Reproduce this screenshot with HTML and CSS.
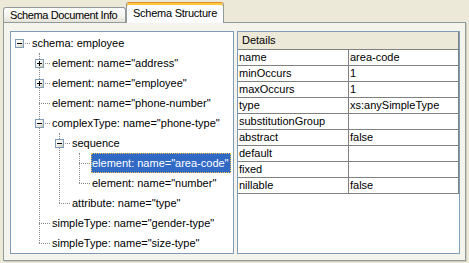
FILE: index.html
```html
<!DOCTYPE html>
<html>
<head>
<meta charset="utf-8">
<link rel="stylesheet" href="styles.css">
</head>
<body>
<div class="window">
  <div class="tabs">
    <div class="tab">Schema Document Info</div>
    <div class="tab active">Schema Structure</div>
  </div>
  <div class="panel">
    <div class="tree">
      <ul class="list">
        <li>
          <div class="row"><span class="tg minus"></span><span class="label">schema: employee</span></div>
          <ul class="list children">
            <li><div class="row"><span class="tg plus"></span><span class="label">element: name="address"</span></div></li>
            <li><div class="row"><span class="tg plus"></span><span class="label">element: name="employee"</span></div></li>
            <li><div class="row"><span class="tg none"></span><span class="label">element: name="phone-number"</span></div></li>
            <li>
              <div class="row"><span class="tg minus"></span><span class="label">complexType: name="phone-type"</span></div>
              <ul class="list children">
                <li>
                  <div class="row"><span class="tg minus"></span><span class="label">sequence</span></div>
                  <ul class="list children">
                    <li><div class="row"><span class="tg none"></span><span class="label selected">element: name="area-code"</span></div></li>
                    <li><div class="row"><span class="tg none"></span><span class="label">element: name="number"</span></div></li>
                  </ul>
                </li>
                <li><div class="row"><span class="tg none"></span><span class="label">attribute: name="type"</span></div></li>
              </ul>
            </li>
            <li><div class="row"><span class="tg none"></span><span class="label">simpleType: name="gender-type"</span></div></li>
            <li><div class="row"><span class="tg none"></span><span class="label">simpleType: name="size-type"</span></div></li>
          </ul>
        </li>
      </ul>
    </div>
    <div class="details">
      <div class="dhead">Details</div>
      <div class="drow"><span class="k">name</span><span class="v">area-code</span></div>
      <div class="drow"><span class="k">minOccurs</span><span class="v">1</span></div>
      <div class="drow"><span class="k">maxOccurs</span><span class="v">1</span></div>
      <div class="drow"><span class="k">type</span><span class="v">xs:anySimpleType</span></div>
      <div class="drow"><span class="k">substitutionGroup</span><span class="v"></span></div>
      <div class="drow"><span class="k">abstract</span><span class="v">false</span></div>
      <div class="drow"><span class="k">default</span><span class="v"></span></div>
      <div class="drow"><span class="k">fixed</span><span class="v"></span></div>
      <div class="drow"><span class="k">nillable</span><span class="v">false</span></div>
    </div>
  </div>
</div>
</body>
</html>
```
FILE: styles.css
```css
* { box-sizing: border-box; }
html, body { margin: 0; padding: 0; }
body {
  background: #ECE9D8;
  font-family: "Liberation Sans", Arial, sans-serif;
  font-size: 11px;
  color: #000;
  width: 469px;
  height: 263px;
  overflow: hidden;
}
.window { padding: 0; }

.tabs {
  display: flex;
  align-items: flex-end;
  height: 22px;
  padding-left: 3px;
}
.tab {
  position: relative;
  height: 15px;
  width: 123px;
  padding: 1px 0 0 6px;
  line-height: 13px;
  letter-spacing: -0.38px;
  white-space: nowrap;
  border: 1px solid #919B9C;
  border-bottom: none;
  border-radius: 3px 3px 0 0;
  background: linear-gradient(#FFFFFF, #F3F2EC 60%, #E4E2D8);
}
.tab.active {
  z-index: 2;
  width: 98px;
  height: 21px;
  margin-bottom: -1px;
  padding: 4px 0 3px 6px;
  letter-spacing: -0.25px;
  background: #FCFCFE;
  border-top: 1px solid #E68B2C;
  box-shadow: inset 0 2px 0 #FFC73C;
}

.panel {
  position: relative;
  margin-left: 3px;
  width: 463px;
  height: 239px;
  border: 1px solid #919B9C;
  background: #F4F3EC;
  padding: 8px 5px 6px 6px;
  display: grid;
  grid-template-columns: 224px 223px;
  column-gap: 3px;
  box-shadow: 1px 1px 0 #D0CDBE;
}

.tree {
  border: 1px solid #7F9DB9;
  background: #FFFFFF;
  padding: 1px 0 0 4px;
  overflow: hidden;
}
.list {
  list-style: none;
  margin: 0;
  padding: 0;
}
.children {
  position: relative;
  margin-left: 20px;
}
.children::before {
  content: "";
  position: absolute;
  left: 4px;
  top: 0;
  bottom: 10px;
  border-left: 1px dotted #8A8A8A;
}
.row {
  position: relative;
  display: flex;
  height: 20px;
  white-space: nowrap;
}
.row::before {
  content: "";
  position: absolute;
  left: 4px;
  top: 10px;
  width: 11px;
  border-top: 1px dotted #8A8A8A;
}
.tg {
  position: relative;
  z-index: 1;
  flex: none;
  width: 9px;
  height: 9px;
  margin: 6px 7px 0 0;
}
.tg.plus, .tg.minus {
  border: 1px solid #7F9DB9;
  background: linear-gradient(135deg, #FFFFFF 20%, #E6E3D6 70%, #C9C5B3);
}
.tg.plus::before, .tg.minus::before {
  content: "";
  position: absolute;
  left: 1px;
  top: 3px;
  width: 5px;
  height: 1px;
  background: #000;
}
.tg.plus::after {
  content: "";
  position: absolute;
  left: 3px;
  top: 1px;
  width: 1px;
  height: 5px;
  background: #000;
}
.label {
  position: relative;
  z-index: 1;
  height: 20px;
  line-height: 18px;
  padding: 0 1px 0 0;
  border: 1px solid transparent;
}
.label.selected {
  background: #316AC5;
  color: #FFFFFF;
  border: 1px dotted #F2C24E;
}

.details {
  border: 1px solid #7F9DB9;
  background: #FFFFFF;
  overflow: hidden;
}
.dhead {
  height: 18px;
  line-height: 16px;
  padding-left: 4px;
  background: #ECE9D8;
  border-bottom: 1px solid #808080;
  border-right: 1px solid #808080;
}
.drow {
  display: grid;
  grid-template-columns: 111px 1fr;
  height: 16px;
  line-height: 15px;
  border-bottom: 1px solid #808080;
  border-right: 1px solid #808080;
}
.k {
  padding-left: 1px;
  border-right: 1px solid #808080;
  white-space: nowrap;
}
.v {
  padding-left: 1px;
  white-space: nowrap;
}
```
